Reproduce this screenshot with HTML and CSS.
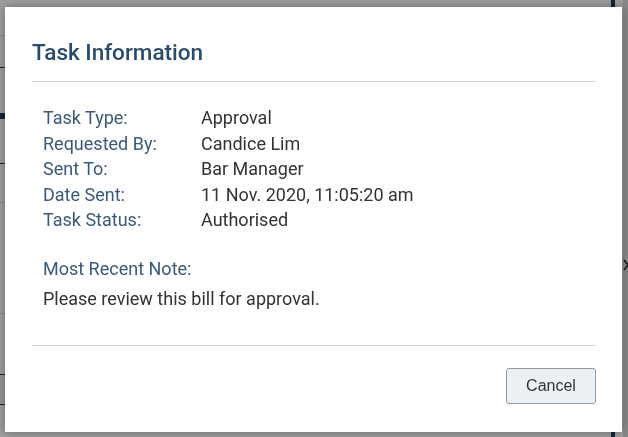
FILE: index.html
```html
<!DOCTYPE html>
<html lang="en">
<head>
<meta charset="utf-8">
<title>Task Information</title>
<link rel="stylesheet" href="styles.css">
</head>
<body>
<div class="page">
  <div class="page-main">
    <div class="pg-row pg-r1"></div>
    <div class="pg-row pg-r2"></div>
    <div class="pg-row pg-r3"><div class="pg-tab"></div></div>
    <div class="pg-row pg-r4"></div>
    <div class="pg-row pg-r5"></div>
    <div class="pg-row pg-r6"></div>
    <div class="pg-row pg-r7"></div>
    <div class="pg-row pg-r8"></div>
    <div class="pg-row pg-r9"></div>
  </div>
  <div class="page-rail"></div>
  <div class="page-gap"></div>
  <div class="page-side">
    <svg class="chev" width="6" height="12" viewBox="0 0 6 12"><polyline points="1,1 5,6 1,11" fill="none" stroke="#222" stroke-width="1.6"/></svg>
  </div>
</div>
<div class="overlay"></div>
<div class="modal" role="dialog">
  <div class="modal-header">
    <h2 class="modal-title">Task Information</h2>
  </div>
  <div class="modal-body">
    <dl class="info">
      <dt>Task Type:</dt><dd>Approval</dd>
      <dt>Requested By:</dt><dd>Candice Lim</dd>
      <dt>Sent To:</dt><dd>Bar Manager</dd>
      <dt>Date Sent:</dt><dd>11 Nov. 2020, 11:05:20 am</dd>
      <dt>Task Status:</dt><dd>Authorised</dd>
    </dl>
    <div class="note-label">Most Recent Note:</div>
    <div class="note-text">Please review this bill for approval.</div>
  </div>
  <div class="modal-footer">
    <button class="btn" type="button">Cancel</button>
  </div>
</div>
</body>
</html>
```

FILE: styles.css
```css
html, body {
  margin: 0;
  padding: 0;
  height: 100%;
  overflow: hidden;
}
body {
  background: #ffffff;
  font-family: Roboto, "Liberation Sans", sans-serif;
}

/* background page (mostly hidden) */
.page {
  display: flex;
  height: 437px;
}
.page-main {
  flex: 1;
  display: flex;
  flex-direction: column;
}
.pg-row { box-sizing: border-box; }
.pg-r1 { height: 36px; border-bottom: 1px solid #e4e4e4; }
.pg-r2 { height: 32px; border-bottom: 1px solid #1f3a56; }
.pg-r3 { height: 52px; display: flex; align-items: flex-end; padding-bottom: 1px; }
.pg-tab { width: 100%; height: 6px; background: #1f3a56; }
.pg-r4 { height: 44px; border-bottom: 1px solid #1f3a56; }
.pg-r5 { height: 39px; border-bottom: 1px solid #dcdcdc; }
.pg-r6 { height: 111px; border-bottom: 1px solid #dcdcdc; }
.pg-r7 { height: 61px; border-bottom: 1px solid #1f3a56; }
.pg-r8 { height: 30px; border-bottom: 1px solid #1f3a56; background: #f2f2f2; }
.pg-r9 { flex: 1; }
.page-rail { width: 4px; background: #1f3a56; }
.page-gap { width: 8px; }
.page-side {
  width: 5px;
  background: #dedede;
  padding-top: 259px;
  overflow: hidden;
}
.chev { display: block; margin-left: 0; }

.overlay {
  position: fixed;
  inset: 0;
  background: rgba(0, 0, 0, 0.38);
}

/* modal */
.modal {
  position: fixed;
  left: 5px;
  top: 7px;
  width: 617px;
  height: 425px;
  box-sizing: border-box;
  background: #fff;
  box-shadow: 0 0 10px rgba(0, 0, 0, 0.35);
  padding: 0 26px 0 27px;
  display: flex;
  flex-direction: column;
}
.modal-header {
  padding: 31px 0 15px;
  border-bottom: 1px solid #cdd4d8;
}
.modal-title {
  margin: 0;
  font-size: 22.5px;
  line-height: 28px;
  font-weight: 500;
  color: #2b4b6a;
}
.modal-body {
  padding: 23px 11px 34px;
  border-bottom: 1px solid #cdd4d8;
}
.info {
  margin: 0;
  display: grid;
  grid-template-columns: 158px 1fr;
  font-size: 18px;
  line-height: 25.5px;
}
.info dt { color: #3a5a78; }
.info dd { margin: 0; color: #333; }
.note-label {
  margin-top: 23px;
  font-size: 18px;
  line-height: 25.5px;
  color: #3a5a78;
}
.note-text {
  margin-top: 4.5px;
  font-size: 18px;
  line-height: 25.5px;
  color: #333;
}
.modal-footer {
  display: flex;
  justify-content: flex-end;
  padding-top: 22px;
}
.btn {
  width: 90px;
  height: 36px;
  box-sizing: border-box;
  border: 1px solid #8e9ba5;
  border-radius: 3px;
  background: #edf0f3;
  color: #333;
  font-family: "Liberation Sans", Arial, sans-serif;
  font-size: 16px;
  padding: 0;
}
```
